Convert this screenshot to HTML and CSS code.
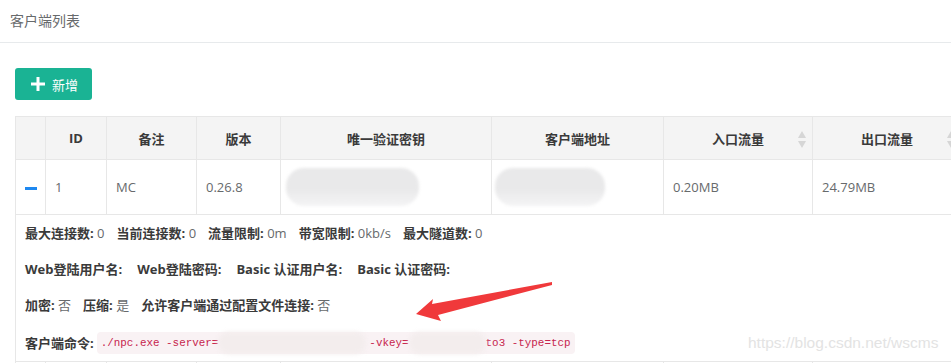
FILE: index.html
```html
<!DOCTYPE html>
<html lang="zh">
<head>
    <meta charset="UTF-8">
    <title>客户端列表</title>
    <link rel="stylesheet" href="styles.css">
</head>
<body>
    <div class="ibox-title">
        <h5>客户端列表</h5>
    </div>
    <div class="ibox-content">
        <button class="btn-add">
            <svg class="plus" width="14" height="14" viewBox="0 0 14 14"><path d="M7 0v14M0 7h14" stroke="#fff" stroke-width="3"/></svg>
            新增
        </button>
        <table class="client-table">
            <colgroup>
                <col style="width:30px"><col style="width:61px"><col style="width:90px"><col style="width:84px">
                <col style="width:211px"><col style="width:172px"><col style="width:149px"><col style="width:149px">
            </colgroup>
            <thead>
                <tr>
                    <th></th>
                    <th>ID</th>
                    <th>备注</th>
                    <th>版本</th>
                    <th>唯一验证密钥</th>
                    <th>客户端地址</th>
                    <th class="sortable">入口流量<span class="sort"></span></th>
                    <th class="sortable">出口流量<span class="sort"></span></th>
                </tr>
            </thead>
            <tbody>
                <tr class="data-row">
                    <td class="toggle"><span class="minus"></span></td>
                    <td>1</td>
                    <td>MC</td>
                    <td>0.26.8</td>
                    <td><span class="smudge key"></span></td>
                    <td><span class="smudge addr"></span></td>
                    <td>0.20MB</td>
                    <td>24.79MB</td>
                </tr>
                <tr class="detail-row">
                    <td colspan="8">
                        <div class="detail-lines">
                            <div class="line">
                                <span class="item"><b>最大连接数:</b> 0</span>
                                <span class="item"><b>当前连接数:</b> 0</span>
                                <span class="item"><b>流量限制:</b> 0m</span>
                                <span class="item"><b>带宽限制:</b> 0kb/s</span>
                                <span class="item"><b>最大隧道数:</b> 0</span>
                            </div>
                            <div class="line">
                                <span class="item wide"><b>Web登陆用户名:</b></span>
                                <span class="item wide"><b>Web登陆密码:</b></span>
                                <span class="item wide"><b>Basic 认证用户名:</b></span>
                                <span class="item wide"><b>Basic 认证密码:</b></span>
                            </div>
                            <div class="line">
                                <span class="item"><b>加密:</b> 否</span>
                                <span class="item"><b>压缩:</b> 是</span>
                                <span class="item"><b>允许客户端通过配置文件连接:</b> 否</span>
                            </div>
                            <div class="line">
                                <b>客户端命令:</b>
                                <code>./npc.exe -server=<span class="code-smudge s1"></span>-vkey=<span class="code-smudge s2"></span>to3 -type=tcp</code>
                            </div>
                        </div>
                    </td>
                </tr>
                <tr class="data-row">
                    <td class="toggle"></td><td></td><td></td><td></td><td></td><td></td><td></td><td></td>
                </tr>
            </tbody>
        </table>
    </div>

    <svg class="arrow" width="140" height="42" viewBox="414 281 140 42">
        <polygon points="416,314 433,299 432,304 552,282 552,285 438,315 441,321" fill="#f0393b"/>
    </svg>
    <div class="watermark">https://blog.csdn.net/wscms</div>
</body>
</html>
```

FILE: styles.css
```css
body {
    margin: 0;
    font-family: "Open Sans", "Noto Sans CJK SC", sans-serif;
    font-size: 13px;
    color: #676a6c;
    background: #fff;
    overflow: hidden;
    position: relative;
    height: 363px;
}
.ibox-title {
    padding: 11px 10px 11px;
    border-bottom: 1px solid #e7eaec;
}
.ibox-title h5 {
    margin: 0;
    font-size: 14px;
    font-weight: normal;
    line-height: 20px;
    color: #676a6c;
}
.ibox-content {
    padding: 25px 0 0 15px;
}
.btn-add {
    display: flex;
    align-items: center;
    gap: 7px;
    height: 32px;
    padding: 0 14px 0 16px;
    background: #1ab394;
    color: #fff;
    border: none;
    border-radius: 3px;
    font-family: inherit;
    font-size: 13px;
    margin-bottom: 16px;
}
.client-table {
    border-collapse: collapse;
    table-layout: fixed;
    width: 946px;
}
.client-table th,
.client-table td {
    border: 1px solid #e7e7e7;
    padding: 0 9px;
    text-align: left;
    white-space: nowrap;
    overflow: hidden;
}
.client-table th {
    background: #f4f4f4;
    height: 42px;
    text-align: center;
    font-weight: bold;
    color: #3a3a3a;
    position: relative;
}
.sort {
    position: absolute;
    right: 6px;
    top: 14px;
    width: 8px;
    height: 17px;
}
.sort::before,
.sort::after {
    content: "";
    position: absolute;
    left: 0;
    border-left: 4px solid transparent;
    border-right: 4px solid transparent;
}
.sort::before {
    top: 0;
    border-bottom: 7px solid #d6d6d6;
}
.sort::after {
    bottom: 0;
    border-top: 7px solid #d6d6d6;
}
.data-row td {
    height: 54px;
}
.toggle {
    text-align: center;
}
.minus {
    display: inline-block;
    width: 12px;
    height: 3px;
    background: #1e88f0;
    vertical-align: middle;
}
.smudge {
    display: inline-block;
    height: 38px;
    border-radius: 18px;
    background: linear-gradient(#e9e9ea 55%, #f4f4f5);
    filter: blur(1.5px);
    vertical-align: middle;
}
.smudge.key {
    width: 133px;
    margin-left: -4px;
}
.smudge.addr {
    width: 110px;
    margin-left: -6px;
}
.detail-row td {
    padding: 9px 9px 7px;
}
.detail-lines {
    display: flex;
    flex-direction: column;
    gap: 18px;
}
.line {
    line-height: 18px;
    display: flex;
    align-items: center;
}
.line b {
    color: #3a3a3a;
}
.item {
    margin-right: 12px;
}
.item.wide {
    margin-right: 15px;
}
.line code {
    margin-left: 3px;
    padding: 0 4px;
    font-family: "Liberation Mono", monospace;
    font-size: 10.9px;
    line-height: 18px;
    color: #c7254e;
    background: #f9f2f4;
    border-radius: 4px;
    display: inline-flex;
    align-items: center;
}
.code-smudge {
    display: inline-block;
    height: 22px;
    background: #f3eded;
    border-radius: 10px;
    filter: blur(2px);
}
.code-smudge.s1 {
    width: 148px;
    margin-right: 3px;
}
.code-smudge.s2 {
    width: 77px;
}
.arrow {
    position: absolute;
    left: 414px;
    top: 281px;
}
.watermark {
    position: absolute;
    left: 748px;
    top: 334px;
    font-family: "Liberation Sans", sans-serif;
    font-size: 15.5px;
    color: #e3e3e3;
}
```
